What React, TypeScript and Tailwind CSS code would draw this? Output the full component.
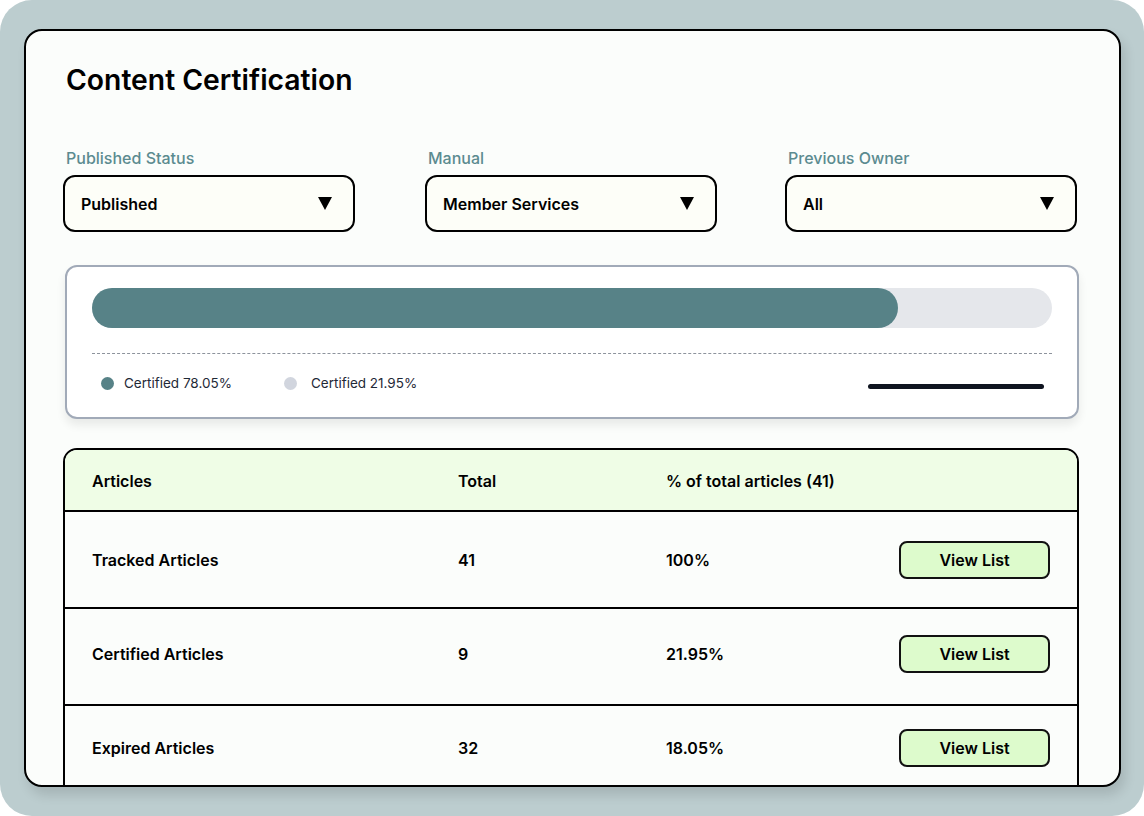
type TFilter = {
  label: string
  value: string
  offset: string
}

type TRow = {
  name: string
  total: string
  pct: string
  cls: string
}

const FILTERS: TFilter[] = [
  { label: 'Published Status', value: 'Published', offset: '' },
  { label: 'Manual', value: 'Member Services', offset: 'ml-[70px]' },
  { label: 'Previous Owner', value: 'All', offset: 'ml-[68px]' },
]

// row paddings are uneven in the mock, kept as-is
const ROWS: TRow[] = [
  { name: 'Tracked Articles', total: '41', pct: '100%', cls: 'border-b-2 border-black' },
  { name: 'Certified Articles', total: '9', pct: '21.95%', cls: 'border-b-2 border-black pb-[5px]' },
  { name: 'Expired Articles', total: '32', pct: '18.05%', cls: 'pb-[13px]' },
]

function Caret() {
  return (
    <svg width="14" height="13" viewBox="0 0 14 13" aria-hidden="true">
      <polygon points="0,0 14,0 7,13" fill="#000" />
    </svg>
  )
}

function FilterSelect({ label, value, offset }: TFilter) {
  return (
    <div className={`flex w-[292px] flex-col ${offset}`}>
      <span className="pl-[3px] text-[16px] leading-6 font-medium text-[#5b8b90]">{label}</span>
      <button className="mt-[5px] flex h-[57px] items-center justify-between rounded-[12px] border-2 border-black bg-[#fdfef8] pr-[21px] pl-[16px] text-left">
        <span className="text-[16px] font-semibold text-black">{value}</span>
        <Caret />
      </button>
    </div>
  )
}

function ProgressCard() {
  return (
    <div className="mt-[33px] ml-[2px] rounded-[12px] border-2 border-[#a1aab8] bg-white px-[25px] pt-[21px] pb-[24px] shadow-[0_6px_10px_rgba(0,0,0,0.08)]">
      <div className="h-[40px] w-full rounded-full bg-[#e5e7eb]">
        <div className="h-full w-[806px] rounded-full bg-[#578287]" />
      </div>
      <div className="mt-[25px] border-t border-dashed border-[#8d939c]" />
      <div className="mt-[19px] flex items-center text-[13.5px] leading-5 text-[#1f2937]">
        <span className="ml-[9px] h-[13px] w-[13px] rounded-full bg-[#578287]" />
        <span className="ml-[10px]">Certified 78.05%</span>
        <span className="ml-[52px] h-[13px] w-[13px] rounded-full bg-[#d1d5de]" />
        <span className="ml-[14px]">Certified 21.95%</span>
        <span className="mt-[6px] mr-[8px] ml-auto h-[5px] w-[176px] rounded-full bg-[#0f1420]" />
      </div>
    </div>
  )
}

function ArticlesTable() {
  return (
    <div className="mt-[29px] rounded-t-[14px] border-2 border-black">
      <div className="grid h-[62px] grid-cols-[366px_208px_1fr] items-center rounded-t-[12px] border-b-2 border-black bg-[#effde6] pt-[2px] pl-[27px] text-[16px] font-semibold text-black">
        <span>Articles</span>
        <span>Total</span>
        <span>% of total articles (41)</span>
      </div>
      {ROWS.map((row) => (
        <div
          key={row.name}
          className={`grid h-[97px] grid-cols-[366px_208px_1fr_auto] items-center pr-[27px] pl-[27px] text-[16px] font-semibold text-black ${row.cls}`}
        >
          <span>{row.name}</span>
          <span>{row.total}</span>
          <span>{row.pct}</span>
          <button className="h-[38px] w-[151px] rounded-[8px] border-2 border-[#111] bg-[#ddfbcc] text-[16px] font-semibold">
            View List
          </button>
        </div>
      ))}
    </div>
  )
}

export default function App() {
  return (
    <div className="h-[816px] w-[1144px] bg-white font-['Inter',sans-serif]">
      <div className="h-full w-full overflow-hidden rounded-[32px] bg-[#bccdcf] pt-[29px] pl-[24px]">
        <div className="h-[758px] w-[1097px] overflow-hidden rounded-[18px] border-2 border-black bg-[#fbfdfb] pt-[31px] pr-[40px] pl-[37px] shadow-[4px_8px_12px_rgba(0,0,0,0.12)]">
          <h1 className="ml-[3px] text-[28.3px] leading-9 font-semibold text-black">Content Certification</h1>
          <div className="mt-[48px] flex">
            {FILTERS.map((f) => (
              <FilterSelect key={f.label} {...f} />
            ))}
          </div>
          <ProgressCard />
          <ArticlesTable />
        </div>
      </div>
    </div>
  )
}
